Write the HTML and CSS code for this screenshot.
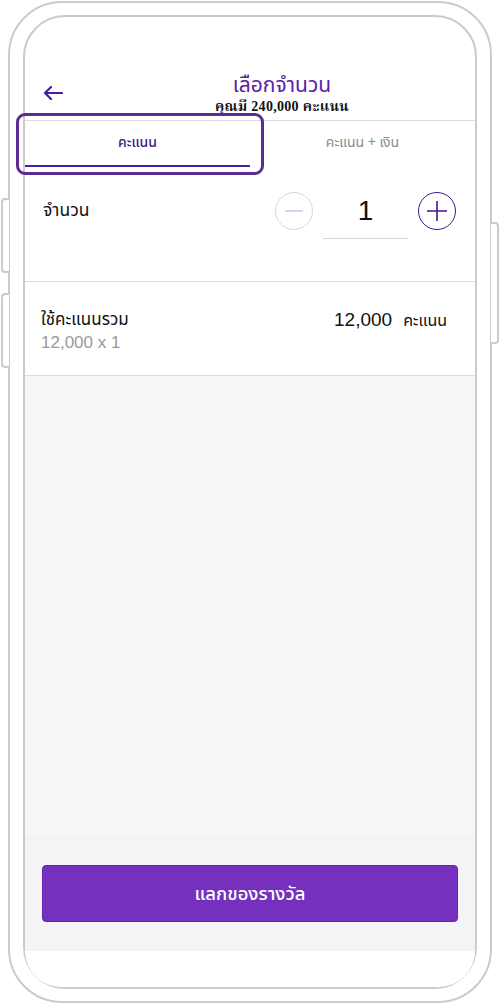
FILE: index.html
```html
<!DOCTYPE html>
<html lang="th">
<head>
    <meta charset="UTF-8">
    <title>เลือกจำนวน</title>
    <link rel="stylesheet" href="styles.css">
</head>
<body>
<div class="phone">
    <span class="side side-l1"></span>
    <span class="side side-l2"></span>
    <span class="side side-r"></span>
    <div class="screen">
        <header class="top">
            <svg class="back" width="20" height="14" viewBox="0 0 20 14">
                <path d="M19 7H2M8 1L2 7l6 6" fill="none" stroke="#4b1b9c" stroke-width="2.2" stroke-linecap="round" stroke-linejoin="round"/>
            </svg>
            <div class="heading">
                <div class="title">เลือกจำนวน</div>
                <div class="sub">คุณมี 240,000 คะแนน</div>
            </div>
        </header>
        <nav class="tabs">
            <div class="tab active">คะแนน<span class="focus"></span></div>
            <div class="tab">คะแนน + เงิน</div>
        </nav>
        <section class="qty">
            <div class="label">จำนวน</div>
            <div class="stepper">
                <span class="circle minus"><svg width="38" height="38" viewBox="0 0 38 38"><path d="M10 19h18" stroke="#cbc3e0" stroke-width="1.5"/></svg></span>
                <span class="count">1</span>
                <span class="circle plus"><svg width="38" height="38" viewBox="0 0 38 38"><path d="M9 19h20M19 9v20" stroke="#3f1596" stroke-width="1.6"/></svg></span>
            </div>
        </section>
        <section class="total">
            <div>
                <div class="label">ใช้คะแนนรวม</div>
                <div class="calc">12,000 x 1</div>
            </div>
            <div class="sum"><span class="num">12,000</span><span class="unit">คะแนน</span></div>
        </section>
        <div class="fill"></div>
        <footer class="actions">
            <button class="redeem">แลกของรางวัล</button>
        </footer>
        <div class="home"></div>
    </div>
</div>
</body>
</html>
```

FILE: styles.css
```css
*{
    margin: 0;
    padding: 0;
    box-sizing: border-box;
}
body{
    background: #fff;
    font-family: "Noto Sans Thai", "Noto Sans", "Liberation Sans", sans-serif;
    color: #111;
}
.phone{
    position: relative;
    width: 484px;
    height: 1002px;
    margin: 1px 0 0 8px;
    padding: 12px 13px;
    border: 2px solid #cbcbcb;
    border-radius: 54px;
}
.side{
    position: absolute;
    width: 8px;
    background: #fff;
    border: 2px solid #cbcbcb;
}
.side-l1, .side-l2{
    left: -9px;
    border-right: none;
    border-radius: 4px 0 0 4px;
}
.side-l1{ top: 195px; height: 75px; }
.side-l2{ top: 290px; height: 75px; }
.side-r{
    right: -9px;
    top: 219px;
    height: 122px;
    border-left: none;
    border-radius: 0 4px 4px 0;
}
.screen{
    height: 100%;
    border: 2px solid #cbcbcb;
    border-radius: 42px;
    display: flex;
    flex-direction: column;
}
.top{
    height: 104px;
    display: flex;
    align-items: flex-end;
    padding: 0 18px 4px 18px;
    border-bottom: 1px solid #dcdcdc;
}
.back{
    margin-bottom: 16px;
    flex: none;
}
.heading{
    flex: 1;
    padding-left: 44px;
    text-align: center;
}
.title{
    font-size: 21px;
    line-height: 25px;
    color: #5a22a6;
}
.sub{
    font-family: "Liberation Serif", "Noto Serif Thai", serif;
    font-weight: bold;
    font-size: 14px;
    line-height: 18px;
    letter-spacing: 0.3px;
    color: #111;
}
.tabs{
    display: flex;
    height: 46px;
}
.tab{
    position: relative;
    flex: 1;
    text-align: center;
    font-size: 14px;
    line-height: 44px;
    color: #8a8a8a;
    border-bottom: 2px solid transparent;
}
.tab.active{
    color: #3d1a8a;
    font-weight: 500;
    border-bottom-color: #4a20a0;
}
.focus{
    position: absolute;
    left: -9px;
    right: -14px;
    top: -8px;
    bottom: -10px;
    border: 3px solid #5c2d91;
    border-radius: 9px;
}
.qty{
    height: 115px;
    display: flex;
    justify-content: space-between;
    align-items: flex-start;
    padding: 25px 19px 0 18px;
    border-bottom: 1px solid #dcdcdc;
}
.label{
    font-size: 17.5px;
    line-height: 38px;
}
.stepper{
    display: flex;
    align-items: flex-start;
    gap: 10px;
}
.circle{
    width: 38px;
    height: 38px;
    border-radius: 50%;
    display: block;
}
.circle svg{
    display: block;
}
.minus{
    border: 1px solid #d8d8de;
}
.plus{
    border: 1.5px solid #3f1596;
}
.minus svg, .plus svg{
    margin: -1px;
}
.count{
    width: 85px;
    height: 47px;
    font-family: "Liberation Sans", sans-serif;
    font-size: 28px;
    line-height: 38px;
    text-align: center;
    border-bottom: 1px solid #d6d6d6;
}
.total{
    height: 94px;
    display: flex;
    justify-content: space-between;
    align-items: flex-start;
    padding: 26px 28px 0 16px;
    border-bottom: 1px solid #dcdcdc;
}
.total .label{
    font-size: 17px;
    line-height: 24px;
}
.calc{
    font-family: "Liberation Sans", sans-serif;
    font-size: 17px;
    line-height: 22px;
    color: #9a9a9a;
}
.sum{
    display: flex;
    align-items: baseline;
    gap: 11px;
    line-height: 24px;
}
.num{
    font-family: "Liberation Sans", sans-serif;
    font-size: 19px;
}
.unit{
    font-size: 16px;
}
.fill{
    flex: 1;
    background: #f7f6f9;
}
.actions{
    height: 117px;
    padding: 31px 17px 29px 17px;
    background: #f4f3f6;
}
.redeem{
    width: 100%;
    height: 57px;
    border: 1px solid #6425b0;
    border-radius: 4px;
    background: #7531be;
    color: #fff;
    font-family: inherit;
    font-size: 18.5px;
    font-weight: 500;
}
.home{
    height: 36px;
    border-radius: 0 0 40px 40px;
    background: #fff;
}
```
